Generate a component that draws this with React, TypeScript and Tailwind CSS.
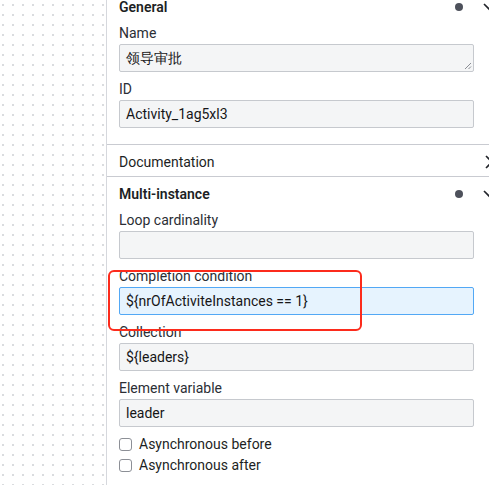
import clsx from 'clsx'

interface FieldProps {
  label: string
  value?: string
  focused?: boolean
  textarea?: boolean
  first?: boolean
}

function Field({ label, value, focused, textarea, first }: FieldProps) {
  return (
    <div className={clsx('ml-[12px] mr-[32px]', first ? 'mt-[1px]' : 'mt-[7px]')}>
      <div className="h-[20px] mb-[1px] leading-[20px] text-[14px] text-[#2b2e35]">{label}</div>
      <div
        className={clsx(
          'relative h-[28px] rounded-[2px] border px-[6px] leading-[27px] text-[14px] text-[#161618]',
          focused ? 'border-[#52a8f5] bg-[#e6f3fe]' : 'border-[#c6c9ce] bg-[#f4f5f6]'
        )}
      >
        {value}
        {textarea && (
          <svg className="absolute right-[1px] bottom-[1px]" width="8" height="8" viewBox="0 0 8 8">
            <path d="M7 1L1 7M7 4.5L4.5 7" stroke="#8a8d94" strokeWidth="1" fill="none" />
          </svg>
        )}
      </div>
    </div>
  )
}

function Chevron({ open }: { open: boolean }) {
  return (
    <svg width="16" height="16" viewBox="0 0 16 16" className="ml-[19px] shrink-0">
      {open ? (
        <path d="M2 5l6 6 6-6" stroke="#22242a" strokeWidth="1.6" fill="none" />
      ) : (
        <path d="M4 2l6 6-6 6" stroke="#22242a" strokeWidth="1.6" fill="none" />
      )}
    </svg>
  )
}

function Header({ title, open, dot, bold }: { title: string; open: boolean; dot?: boolean; bold?: boolean }) {
  return (
    <div className="flex items-center h-[32px] pt-[2px] pl-[12px] pr-[8px]">
      <span className={clsx('flex-1 text-[14px] text-[#1d1f24]', bold ? 'font-semibold' : 'font-normal')}>{title}</span>
      {dot && <span className="w-[8px] h-[8px] rounded-full bg-[#4d515b]" />}
      <Chevron open={open} />
    </div>
  )
}

function Check({ label }: { label: string }) {
  return (
    <div className="flex items-center h-[21px] gap-[7px]">
      <span className="w-[13px] h-[13px] rounded-[3px] border border-[#8c8f96] bg-white" />
      <span className="text-[14px] text-[#1d1f24]">{label}</span>
    </div>
  )
}

export default function App() {
  return (
    <div className="relative flex w-[489px] h-[485px] overflow-hidden bg-white font-['Roboto',sans-serif]">
      {/* canvas */}
      <div className="w-[106px] shrink-0 h-full bg-[radial-gradient(circle,#dadcdf_0.8px,transparent_1.1px)] bg-[length:10px_10px] bg-[position:-2px_0px]" />

      {/* properties panel */}
      <div className="w-[400px] shrink-0 border-l border-[#d6d8dd] bg-white">
        <div className="-mt-[10px] pb-[16px] border-b border-[#c9cbd1]">
          <Header title="General" open dot bold />
          <Field first label="Name" value="领导审批" textarea />
          <Field label="ID" value="Activity_1ag5xl3" />
        </div>
        <div className="border-b border-[#c9cbd1]">
          <div className="flex items-center h-[31px] pt-[3px] pl-[12px] pr-[8px]">
            <span className="flex-1 text-[14px] text-[#1d1f24]">Documentation</span>
            <Chevron open={false} />
          </div>
        </div>
        <div>
          <Header title="Multi-instance" open dot bold />
          <Field first label="Loop cardinality" value="" />
          <Field label="Completion condition" value="${nrOfActiviteInstances == 1}" focused />
          <Field label="Collection" value="${leaders}" />
          <Field label="Element variable" value="leader" />
          <div className="mt-[7px] ml-[12px]">
            <Check label="Asynchronous before" />
            <Check label="Asynchronous after" />
          </div>
        </div>
      </div>

      {/* annotation */}
      <div className="absolute left-[108px] top-[270px] w-[254px] h-[61px] rounded-[6px] border-[2.5px] border-[#fc2b1c]" />
    </div>
  )
}
